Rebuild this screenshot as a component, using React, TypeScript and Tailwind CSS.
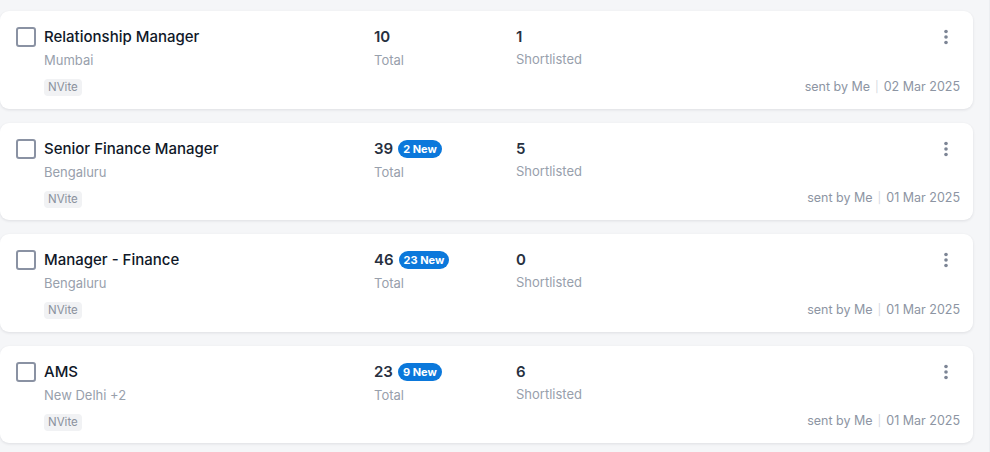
import React from "react";

type Job = {
  title: string;
  location: string;
  total: number;
  newCount?: number;
  shortlisted: number;
  date: string;
};

const jobs: Job[] = [
  { title: "Relationship Manager", location: "Mumbai", total: 10, shortlisted: 1, date: "02 Mar 2025" },
  { title: "Senior Finance Manager", location: "Bengaluru", total: 39, newCount: 2, shortlisted: 5, date: "01 Mar 2025" },
  { title: "Manager - Finance", location: "Bengaluru", total: 46, newCount: 23, shortlisted: 0, date: "01 Mar 2025" },
  { title: "AMS", location: "New Delhi +2", total: 23, newCount: 9, shortlisted: 6, date: "01 Mar 2025" },
];

function Dots() {
  return (
    <svg width="6" height="16" viewBox="0 0 6 16" fill="#7c8595">
      <circle cx="3" cy="2.5" r="1.8" />
      <circle cx="3" cy="8" r="1.8" />
      <circle cx="3" cy="13.5" r="1.8" />
    </svg>
  );
}

function Card({ job }: { job: Job }) {
  return (
    <div className="h-[97.5px] bg-white rounded-[9px] shadow-[0_1px_3px_rgba(16,24,40,0.10)] flex pl-4 pr-[13px] pt-[15px] pb-[12px]">
      <div className="pt-[1px]">
        <div className="w-[20px] h-[20px] rounded-[3px] border-2 border-[#8a92a3] bg-white" />
      </div>
      <div className="ml-2 w-[330px] flex flex-col">
        <div className="text-[15px] leading-[22px] font-medium text-[#101828]">{job.title}</div>
        <div className="mt-[3px] text-[13px] leading-[18px] text-[#98a0ac]">{job.location}</div>
        <div className="mt-[10px] flex">
          <span className="rounded-[4px] bg-[#f1f2f4] px-[4px] text-[11.5px] leading-[17px] text-[#8a919d]">
            NVite
          </span>
        </div>
      </div>
      <div className="w-[142px] flex flex-col">
        <div className="flex items-center h-[22px] gap-[5px]">
          <span className="text-[15px] leading-[22px] font-semibold text-[#27303f]">{job.total}</span>
          {job.newCount !== undefined && (
            <span className="rounded-full bg-[#0b78db] px-[5px] text-[11px] leading-[18px] font-bold text-white">
              {job.newCount} New
            </span>
          )}
        </div>
        <div className="mt-[3px] text-[13px] leading-[18px] text-[#98a0ac]">Total</div>
      </div>
      <div className="flex-1 flex flex-col">
        <div className="text-[15px] leading-[22px] font-semibold text-[#27303f]">{job.shortlisted}</div>
        <div className="mt-[2px] text-[13px] leading-[18px] text-[#98a0ac]">Shortlisted</div>
      </div>
      <div className="flex flex-col items-end justify-between">
        <div className="h-[22px] flex items-center pr-[11px]">
          <Dots />
        </div>
        <div className="flex items-center text-[12.5px] leading-[18px] text-[#8d95a3] mb-[1px]">
          <span>sent by Me</span>
          <span className="mx-[5px] text-[11px] text-[#d5d9df]">|</span>
          <span>{job.date}</span>
        </div>
      </div>
    </div>
  );
}

export default function App() {
  return (
    <div
      className="w-[990px] h-[452px] bg-[#f5f6f8] overflow-hidden border-r border-[#eceef1]"
      style={{ fontFamily: "Inter, 'Noto Sans', sans-serif" }}
    >
      <div className="pt-[11px] pr-[16px] flex flex-col gap-[14px]">
        {jobs.map((j) => (
          <Card key={j.title} job={j} />
        ))}
      </div>
    </div>
  );
}
